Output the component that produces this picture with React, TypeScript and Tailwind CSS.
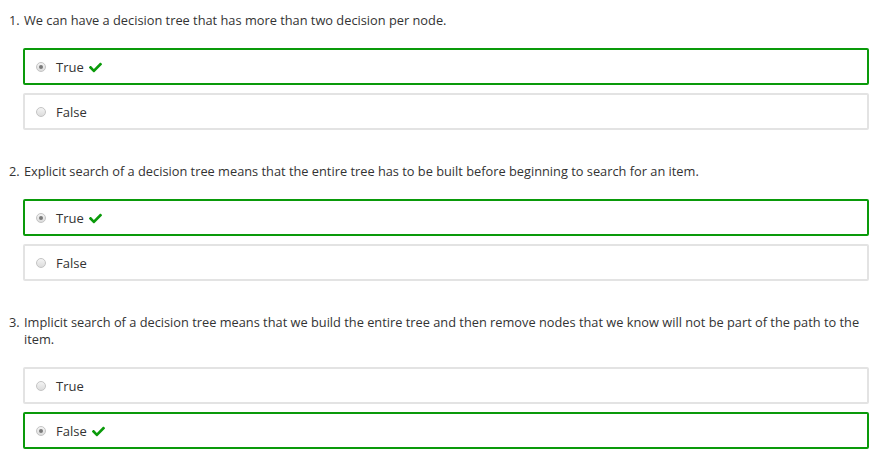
import { FaCheck } from 'react-icons/fa'

type Question = {
  n: number
  text: string
  answer: 'True' | 'False'
}

const questions: Question[] = [
  { n: 1, text: 'We can have a decision tree that has more than two decision per node.', answer: 'True' },
  {
    n: 2,
    text: 'Explicit search of a decision tree means that the entire tree has to be built before beginning to search for an item.',
    answer: 'True',
  },
  {
    n: 3,
    text: 'Implicit search of a decision tree means that we build the entire tree and then remove nodes that we know will not be part of the path to the item.',
    answer: 'False',
  },
]

function Radio({ checked }: { checked: boolean }) {
  return (
    <span className="relative inline-flex size-[10px] items-center justify-center rounded-full border border-[#c4c4c4] bg-gradient-to-b from-[#f4f4f4] to-[#dcdcdc]">
      {checked ? <span className="size-[4px] rounded-full bg-[#7a7a7a]" /> : null}
    </span>
  )
}

function Option({ label, selected }: { label: string; selected: boolean }) {
  const border = selected ? 'border-[#0a9a0a]' : 'border-[#e3e3e3]'
  return (
    <div className={`flex h-[37px] items-center rounded-[2px] border-2 bg-white pl-[11px] ${border}`}>
      <Radio checked={selected} />
      <span className="ml-[10px] pt-[2px] text-[13px] text-[#333]">{label}</span>
      {selected ? <FaCheck className="ml-[5px] mt-[2px] text-[13px] text-[#0a9a0a]" /> : null}
    </div>
  )
}

export default function App() {
  return (
    <div className="min-h-[465px] w-[888px] bg-white pt-[12px] pr-[19px] font-['Open_Sans',sans-serif] text-[#333]">
      {questions.map((q, i) => (
        <section key={q.n} className={i === 0 ? '' : 'mt-[33px]'}>
          <div className="flex text-[12.8px] leading-[17px]">
            <span className="w-[24px] shrink-0 pl-[9px]">{q.n}.</span>
            <p className="pr-[8px]">{q.text}</p>
          </div>
          <div className="mt-[19px] ml-[23px] space-y-2">
            <Option label="True" selected={q.answer === 'True'} />
            <Option label="False" selected={q.answer === 'False'} />
          </div>
        </section>
      ))}
    </div>
  )
}
